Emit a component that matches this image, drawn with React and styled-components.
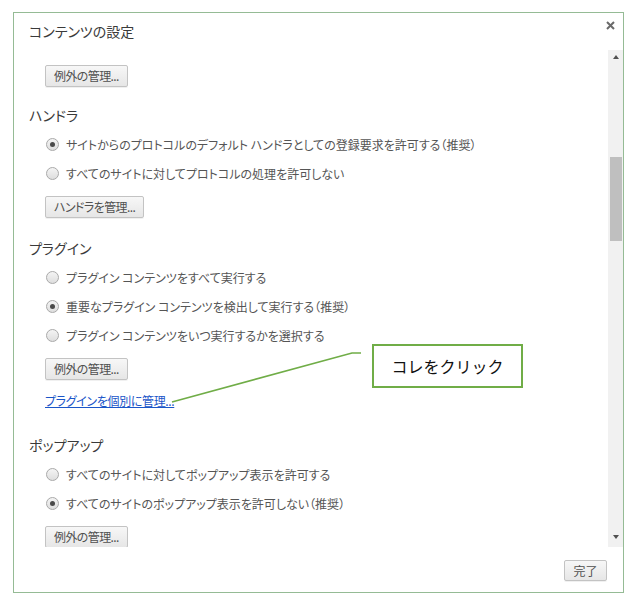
import styled, { createGlobalStyle } from "styled-components"

const GlobalStyle = createGlobalStyle`
  html, body {
    margin: 0;
    padding: 0;
    background: #ffffff;
  }
  body {
    font-family: "Noto Sans CJK JP", "Noto Sans", sans-serif;
    color: #333333;
    font-feature-settings: "palt";
  }
`

const Page = styled.div`
  position: relative;
  width: 640px;
  height: 609px;
  padding: 12px 0 0 13px;
  box-sizing: border-box;
`

const Dialog = styled.div`
  width: 611px;
  height: 581px;
  box-sizing: border-box;
  border: 1px solid #95bb95;
  display: flex;
  flex-direction: column;
  background: #ffffff;
`

const Header = styled.div`
  height: 37px;
  display: flex;
  align-items: center;
  justify-content: space-between;
  padding: 0 8px 0 15px;
  box-sizing: border-box;
`

const Title = styled.h1`
  margin: -1px 0 0;
  font-size: 14px;
  font-weight: normal;
  color: #3a3a3a;
  line-height: 20px;
`

const Close = styled.span`
  display: flex;
  margin-top: -13px;
`

const Body = styled.div`
  height: 497px;
  display: flex;
`

const Content = styled.div`
  flex: 1;
  overflow: hidden;
  padding: 15px 0 0 15px;
  display: flex;
  flex-direction: column;
  align-items: flex-start;
`

const Scrollbar = styled.div`
  width: 15px;
  background: #f1f1f1;
  display: flex;
  flex-direction: column;
  align-items: center;
`

const Arrow = styled.div`
  width: 0;
  height: 0;
  border-left: 3.5px solid transparent;
  border-right: 3.5px solid transparent;
  ${({ $down }) =>
    $down
      ? "border-top: 4px solid #505050; margin-top: auto; margin-bottom: 8px;"
      : "border-bottom: 4px solid #505050; margin-top: 5px;"}
`

const Thumb = styled.div`
  width: 12px;
  height: 84px;
  margin-left: 1px;
  background: #bfbfbf;
`

const Heading = styled.h2`
  margin: ${({ $top }) => $top}px 0 0;
  font-size: 14px;
  font-weight: normal;
  line-height: 20px;
  height: 20px;
  color: #3a3a3a;
`

const Indented = styled.div`
  padding-left: 16px;
  display: flex;
  flex-direction: column;
  align-items: flex-start;
`

const RadioList = styled.div`
  padding-top: 5px;
  display: flex;
  flex-direction: column;
`

const RadioRow = styled.label`
  height: 29px;
  display: flex;
  align-items: center;
  gap: 7px;
  font-size: 12px;
  color: #555555;
  margin-left: 1px;
`

const RadioCircle = styled.span`
  width: 13px;
  height: 13px;
  box-sizing: border-box;
  border-radius: 50%;
  border: 1px solid #a9a9a9;
  background: linear-gradient(#f4f4f4, #dedede);
  display: flex;
  align-items: center;
  justify-content: center;

  &::after {
    content: "";
    width: 5px;
    height: 5px;
    border-radius: 50%;
    background: ${({ $checked }) => ($checked ? "#4a4a4a" : "transparent")};
  }
`

const Button = styled.button`
  height: 22px;
  padding: 0 8px;
  box-sizing: border-box;
  border: 1px solid #c3c3c3;
  border-radius: 2px;
  background: linear-gradient(#f7f7f7, #e6e6e6);
  box-shadow: 0 1px 0 rgba(0, 0, 0, 0.06);
  font-family: "Noto Sans CJK JP", sans-serif;
  font-feature-settings: "palt";
  font-size: 12px;
  letter-spacing: -0.6px;
  color: #505050;
  margin-top: ${({ $top = 0 }) => $top}px;
  line-height: 20px;
`

const Link = styled.a`
  margin-top: 13px;
  font-size: 12px;
  letter-spacing: -0.35px;
  line-height: 16px;
  color: #1a55c8;
  text-decoration: underline;
`

const Footer = styled.div`
  flex: 1;
  display: flex;
  justify-content: flex-end;
  align-items: flex-start;
  padding: 13px 16px 0 0;
`

const DoneButton = styled(Button)`
  height: 21px;
  width: 43px;
  padding: 0;
  letter-spacing: 0;
`

const Callout = styled.div`
  position: absolute;
  left: 372px;
  top: 344px;
  width: 151px;
  height: 44px;
  box-sizing: border-box;
  border: 2px solid #70ad47;
  background: #ffffff;
  display: flex;
  align-items: center;
  justify-content: center;
  font-size: 16px;
  font-feature-settings: normal;
  color: #111111;
`

const Pointer = styled.svg`
  position: absolute;
  left: 0;
  top: 0;
  pointer-events: none;
`

const Radio = ({ checked, children }) => (
  <RadioRow>
    <RadioCircle $checked={checked} />
    {children}
  </RadioRow>
)

export default function App() {
  return (
    <Page>
      <GlobalStyle />
      <Dialog>
        <Header>
          <Title>コンテンツの設定</Title>
          <Close>
            <svg width="9" height="9" viewBox="0 0 9 9">
              <path d="M1 1 L8 8 M8 1 L1 8" stroke="#6a6a6a" strokeWidth="2" />
            </svg>
          </Close>
        </Header>
        <Body>
          <Content>
            <Indented>
              <Button>例外の管理...</Button>
            </Indented>

            <Heading $top={18}>ハンドラ</Heading>
            <Indented>
              <RadioList>
                <Radio checked>サイトからのプロトコルのデフォルト ハンドラとしての登録要求を許可する（推奨）</Radio>
                <Radio>すべてのサイトに対してプロトコルの処理を許可しない</Radio>
              </RadioList>
              <Button $top={8}>ハンドラを管理...</Button>
            </Indented>

            <Heading $top={20}>プラグイン</Heading>
            <Indented>
              <RadioList>
                <Radio>プラグイン コンテンツをすべて実行する</Radio>
                <Radio checked>重要なプラグイン コンテンツを検出して実行する（推奨）</Radio>
                <Radio>プラグイン コンテンツをいつ実行するかを選択する</Radio>
              </RadioList>
              <Button $top={8}>例外の管理...</Button>
              <Link>プラグインを個別に管理...</Link>
            </Indented>

            <Heading $top={26}>ポップアップ</Heading>
            <Indented>
              <RadioList>
                <Radio>すべてのサイトに対してポップアップ表示を許可する</Radio>
                <Radio checked>すべてのサイトのポップアップ表示を許可しない（推奨）</Radio>
              </RadioList>
              <Button $top={8}>例外の管理...</Button>
            </Indented>
          </Content>
          <Scrollbar>
            <Arrow />
            <Thumb style={{ marginTop: 98 }} />
            <Arrow $down />
          </Scrollbar>
        </Body>
        <Footer>
          <DoneButton>完了</DoneButton>
        </Footer>
      </Dialog>

      <Pointer width="640" height="609">
        <polyline
          points="172,402 352,353 361,353"
          fill="none"
          stroke="#70ad47"
          strokeWidth="1.6"
        />
      </Pointer>
      <Callout>コレをクリック</Callout>
    </Page>
  )
}
